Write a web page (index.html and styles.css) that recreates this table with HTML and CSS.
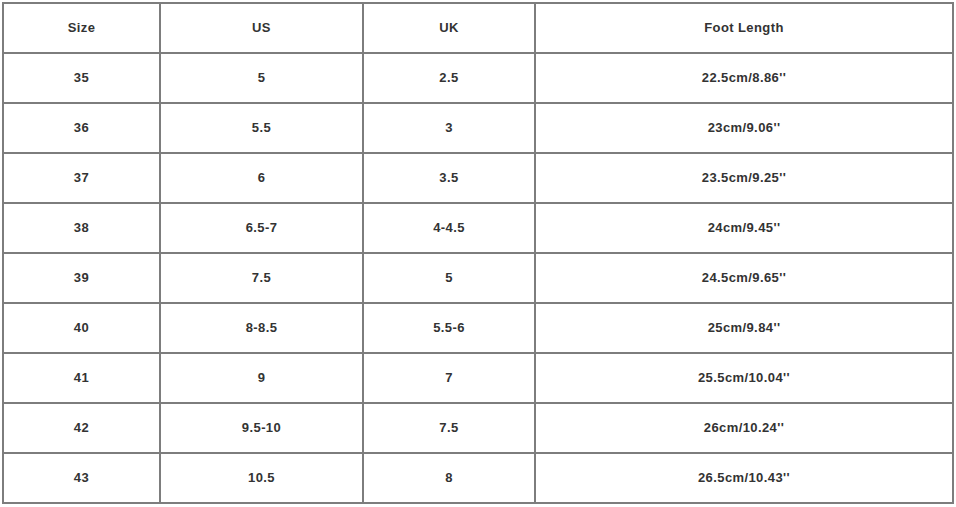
FILE: index.html
```html
<!DOCTYPE html>
<html>
<head>
<meta charset="utf-8">
<link rel="stylesheet" href="styles.css">
</head>
<body>
<table class="size-table">
  <colgroup>
    <col class="c1"><col class="c2"><col class="c3"><col class="c4">
  </colgroup>
  <tr><td>Size</td><td>US</td><td>UK</td><td>Foot Length</td></tr>
  <tr><td>35</td><td>5</td><td>2.5</td><td>22.5cm/8.86''</td></tr>
  <tr><td>36</td><td>5.5</td><td>3</td><td>23cm/9.06''</td></tr>
  <tr><td>37</td><td>6</td><td>3.5</td><td>23.5cm/9.25''</td></tr>
  <tr><td>38</td><td>6.5-7</td><td>4-4.5</td><td>24cm/9.45''</td></tr>
  <tr><td>39</td><td>7.5</td><td>5</td><td>24.5cm/9.65''</td></tr>
  <tr><td>40</td><td>8-8.5</td><td>5.5-6</td><td>25cm/9.84''</td></tr>
  <tr><td>41</td><td>9</td><td>7</td><td>25.5cm/10.04''</td></tr>
  <tr><td>42</td><td>9.5-10</td><td>7.5</td><td>26cm/10.24''</td></tr>
  <tr><td>43</td><td>10.5</td><td>8</td><td>26.5cm/10.43''</td></tr>
</table>
</body>
</html>
```
FILE: styles.css
```css
html, body {
  margin: 0;
  padding: 0;
  background: #ffffff;
}
body {
  padding: 2px 0 0 2px;
}
.size-table {
  border-collapse: collapse;
  table-layout: fixed;
  width: 950px;
  font-family: "Liberation Sans", Arial, sans-serif;
  font-weight: bold;
  font-size: 13px;
  letter-spacing: 0.4px;
  color: #333333;
}
.c1 { width: 157px; }
.c2 { width: 203px; }
.c3 { width: 172px; }
.c4 { width: 418px; }
.size-table td {
  border: 2px solid #7d7d7d;
  height: 46px;
  padding: 0 0 2px 0;
  text-align: center;
  vertical-align: middle;
}
```
